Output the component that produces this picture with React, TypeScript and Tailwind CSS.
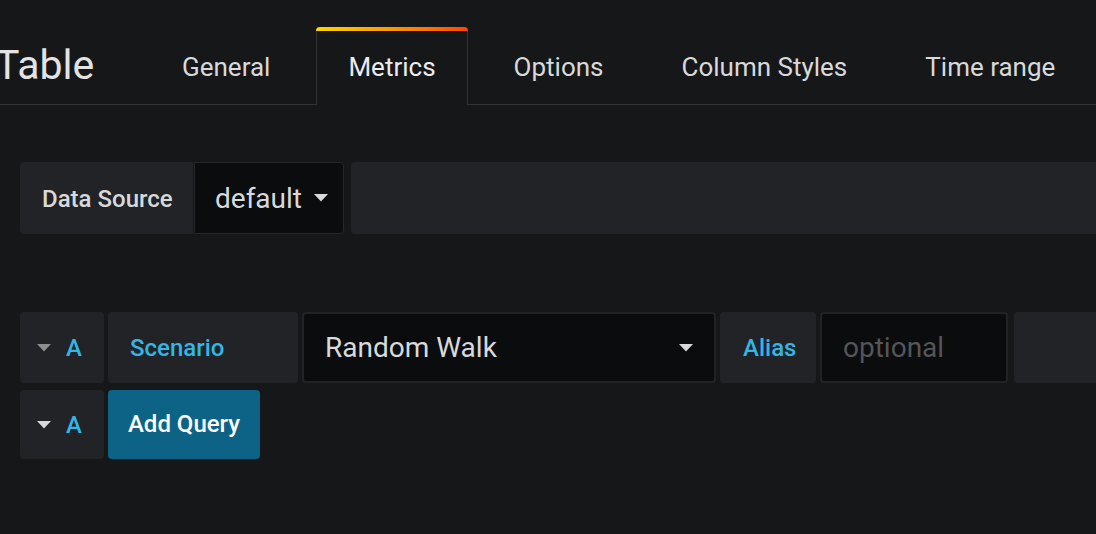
import React from "react";

function Caret({ className }: { className: string }) {
  return (
    <svg width="14" height="8" viewBox="0 0 14 8" className={className}>
      <path d="M0 0 L14 0 L7 7.5 Z" fill="currentColor" />
    </svg>
  );
}

const tabs = ["General", "Metrics", "Options", "Column Styles", "Time range"];

export default function App() {
  return (
    <div
      className="w-[1096px] h-[534px] overflow-hidden bg-[#161719] text-[#d8d9da]"
      style={{ fontFamily: "Roboto, 'Noto Sans', sans-serif" }}
    >
      <div className="h-[105px] border-b border-[#333336] flex items-end">
        <div className="self-start mt-[35px] ml-[-5px] w-[98px] shrink-0 text-[41px] leading-[60px] text-[#e3e3e4] whitespace-nowrap">
          Table
        </div>
        <div className="flex items-end ml-[57px] gap-[14px]">
          {tabs.map((t) => {
            const active = t === "Metrics";
            return (
              <div
                key={t}
                className={
                  active
                    ? "relative h-[78px] mb-[-1px] px-[31px] border border-b-0 border-[#333336] rounded-t-[4px] bg-[#161719] flex items-center text-[26px] text-[#e9edf2] whitespace-nowrap"
                    : "relative h-[78px] mb-[-1px] px-[31px] border border-b-0 border-transparent flex items-center text-[26px] text-[#d8d9da] whitespace-nowrap"
                }
              >
                {active && (
                  <div className="absolute left-[-1px] right-[-1px] top-[-1px] h-[4px] rounded-t-[4px] bg-gradient-to-r from-[#ffd500] to-[#ff4400]" />
                )}
                <span className="pt-[2px]">{t}</span>
              </div>
            );
          })}
        </div>
      </div>

      <div className="pl-[20px]">
        {/* Data source row */}
        <div className="mt-[57px] flex h-[72px]">
          <div className="w-[173px] bg-[#212327] rounded-l-[4px] flex items-center pl-[22px] pt-[2px] text-[24px] font-medium text-[#d8d9da] whitespace-nowrap">
            Data Source
          </div>
          <div className="ml-[1px] w-[150px] bg-[#0b0c0e] border border-[#26272b] rounded-r-[4px] flex items-center pl-[20px] pr-[15px] justify-between">
            <span className="text-[28px] text-[#d8d9da] pt-[2px]">default</span>
            <Caret className="text-[#d8d9da]" />
          </div>
          <div className="ml-[7px] flex-1 bg-[#212327] rounded-l-[4px]" />
        </div>

        {/* Query row */}
        <div className="mt-[78px] flex h-[71px]">
          <div className="w-[84px] bg-[#212327] rounded-[4px] flex items-center pl-[17px]">
            <Caret className="text-[#8e8e8e]" />
            <span className="ml-[15px] text-[24px] font-medium text-[#33b5e5]">A</span>
          </div>
          <div className="ml-[4px] w-[190px] bg-[#212327] rounded-[4px] flex items-center pl-[22px] text-[24px] font-medium text-[#33b5e5]">
            Scenario
          </div>
          <div className="ml-[4px] w-[414px] bg-[#0b0c0e] border-2 border-[#222327] rounded-[4px] flex items-center justify-between pl-[21px] pr-[21px]">
            <span className="text-[28px] text-[#d8d9da]">Random Walk</span>
            <Caret className="text-[#d8d9da]" />
          </div>
          <div className="ml-[4px] w-[96px] bg-[#212327] rounded-[4px] flex items-center pl-[23px] text-[24px] font-medium text-[#33b5e5]">
            Alias
          </div>
          <div className="ml-[4px] w-[188px] bg-[#0b0c0e] border-2 border-[#222327] rounded-[4px] flex items-center pl-[21px] text-[28px] text-[#555558]">
            optional
          </div>
          <div className="ml-[6px] flex-1 bg-[#212327] rounded-l-[4px]" />
        </div>

        {/* Add query row */}
        <div className="mt-[7px] flex h-[69px]">
          <div className="w-[84px] bg-[#212327] rounded-[4px] flex items-center pl-[17px]">
            <Caret className="text-[#d8d9da]" />
            <span className="ml-[15px] text-[24px] font-medium text-[#33b5e5]">A</span>
          </div>
          <div className="ml-[4px] w-[152px] bg-[#0d6386] rounded-[4px] flex items-center justify-center pb-[1px] text-[24px] font-medium text-white whitespace-nowrap">
            Add Query
          </div>
        </div>
      </div>
    </div>
  );
}
